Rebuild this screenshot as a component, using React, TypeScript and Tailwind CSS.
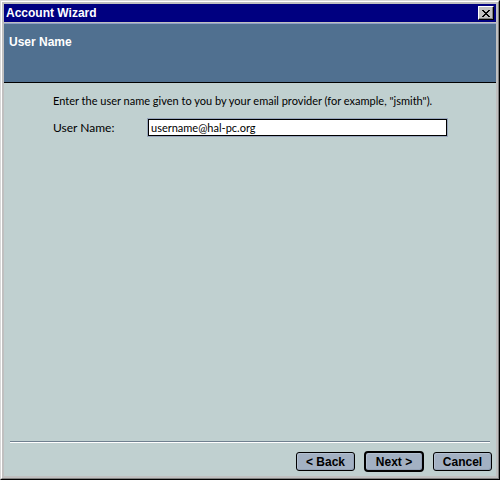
import { useState } from 'react';
import type { ReactNode } from 'react';

type WizardButtonProps = {
  children: ReactNode;
  type?: 'button' | 'submit';
  isDefault?: boolean;
};

function WizardButton({ children, type = 'button', isDefault = false }: WizardButtonProps) {
  return (
    <button
      type={type}
      className={`flex items-center justify-center bg-[#a3b1c3] text-[12px] leading-none font-bold text-black shadow-[inset_1px_1px_0_#b3c0d0,inset_-1px_-1px_0_#93a1b5] ${
        isDefault ? 'h-[21px] w-15 rounded-[4px] border-2 border-black' : 'h-[19px] w-[59px] rounded-[3px] border border-black'
      }`}
    >
      {children}
    </button>
  );
}

function TitleBar({ title }: { title: string }) {
  return (
    <header className="flex h-[18px] items-center justify-between bg-[#000080] pr-[2px] pl-[2px]">
      <h1 className="text-[12px] leading-none font-bold text-white">{title}</h1>
      <button
        type="button"
        aria-label="Close"
        className="flex h-[14px] w-4 items-center justify-center border border-t-white border-r-black border-b-black border-l-white bg-[#c0c0c0] shadow-[inset_-1px_-1px_0_#808080]"
      >
        <svg width="8" height="7" viewBox="0 0 8 7" shapeRendering="crispEdges" aria-hidden="true">
          <path
            d="M0 0h2v1h-2zM6 0h2v1h-2zM1 1h2v1h-2zM5 1h2v1h-2zM2 2h4v1h-4zM3 3h2v1h-2zM2 4h4v1h-4zM1 5h2v1h-2zM5 5h2v1h-2zM0 6h2v1h-2zM6 6h2v1h-2z"
            fill="#000"
          />
        </svg>
      </button>
    </header>
  );
}

export default function App() {
  const [userName, setUserName] = useState('username@hal-pc.org');

  return (
    <div className="border border-t-[#d8d8d8] border-r-black border-b-black border-l-[#d8d8d8] font-['Liberation_Sans',Arial,sans-serif]">
      <div className="border border-t-white border-r-[#808080] border-b-[#808080] border-l-white">
        <main className="flex min-h-[calc(100vh-4px)] flex-col border-2 border-[#c0c0c0] bg-[#c0d0d0]">
          <TitleBar title="Account Wizard" />

          <div className="h-[61px] border-t border-b border-t-[#c0c0c0] border-b-black">
            <div className="h-full border-t border-[#8f9fc8] bg-[#507090] px-[5px] pt-3">
              <h2 className="text-[12px] leading-3 font-bold text-white">User Name</h2>
            </div>
          </div>

          <form className="flex grow flex-col" onSubmit={(e) => e.preventDefault()}>
            <div className="grow pt-3 pr-[49px] pl-[49px] font-['Lato','Liberation_Sans',sans-serif] text-[11px] leading-3 text-black">
              <p className="whitespace-nowrap">
                Enter the user name given to you by your email provider (for example, "jsmith").
              </p>
              <div className="mt-3 flex items-center">
                <label htmlFor="user-name" className="w-[95px] shrink-0 text-[12px]">
                  User Name:
                </label>
                <input
                  id="user-name"
                  type="text"
                  value={userName}
                  onChange={(e) => setUserName(e.target.value)}
                  className="h-[17px] min-w-0 grow border border-black bg-white px-[2px] leading-none shadow-[0_0_0_1px_#98a6bc] outline-none"
                />
              </div>
            </div>

            <hr className="mr-[6px] ml-[6px] h-[2px] border-t border-b border-t-[#708090] border-b-white" />
            <div className="flex items-center justify-end gap-[9px] pt-2 pr-1 pb-1">
              <WizardButton>&lt; Back</WizardButton>
              <WizardButton type="submit" isDefault>
                Next &gt;
              </WizardButton>
              <WizardButton>Cancel</WizardButton>
            </div>
          </form>
        </main>
      </div>
    </div>
  );
}
